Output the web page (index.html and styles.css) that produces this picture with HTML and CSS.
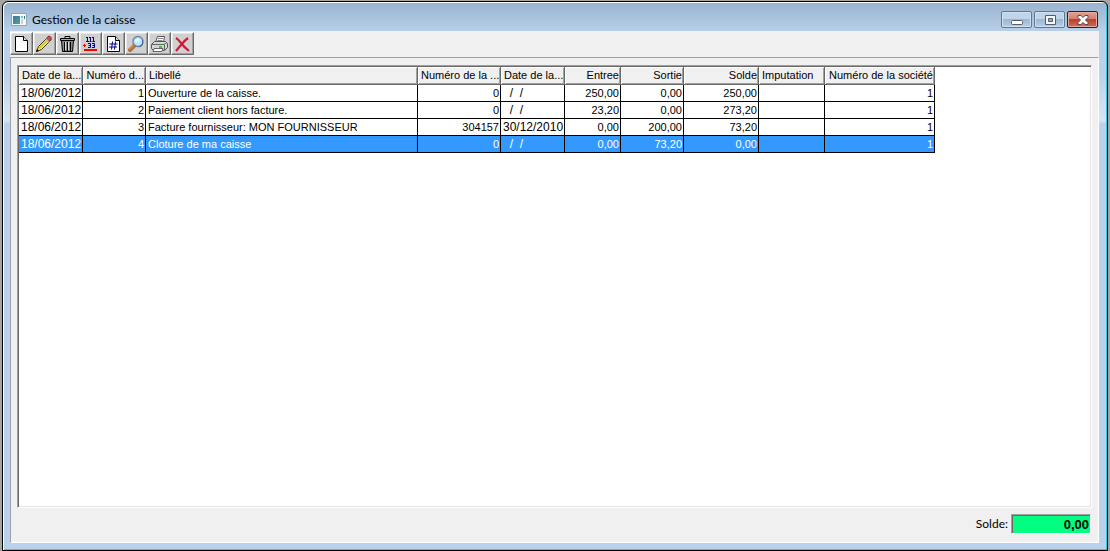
FILE: index.html
```html
<!DOCTYPE html>
<html lang="fr">
<head>
<meta charset="utf-8">
<title>Gestion de la caisse</title>
<link rel="stylesheet" href="styles.css">
</head>
<body>
<div class="window">
  <header class="titlebar">
    <svg class="app-icon" width="16" height="13" viewBox="0 0 16 13"><defs><linearGradient id="app" x2="1" y2="1"><stop stop-color="#3a70b8"/><stop offset="1" stop-color="#54a878"/></linearGradient></defs><path fill="#f8f8f8" stroke="#98a4b0" d="M.5.5h15v12H.5z"/><path fill="url(#app)" d="M2 3h7v8H2z"/><path fill="#83b7c8" d="M10 3h2v2h-2z"/><path fill="#3d7299" d="M13 3h1v3h-1z"/><path fill="#ccd4d8" d="M10 6h2v5h-2z"/></svg>
    <h1 class="title">Gestion de la caisse</h1>
    <div class="caption-buttons">
      <button class="caption" aria-label="Réduire"><svg width="12" height="12" viewBox="0 0 12 12"><rect x=".5" y="6.500" width="11" height="4" rx="1" fill="#fff" stroke="#545b6b"/></svg></button>
      <button class="caption" aria-label="Agrandir"><svg width="12" height="12" viewBox="0 0 12 12"><path d="M1.500 1.500h10v9h-10z" fill="#f5f5f5" stroke="#545b6b"/><path d="M4.500 4.500h4v3h-4z" fill="#8db0cd" stroke="#545b6b"/></svg></button>
      <button class="caption close" aria-label="Fermer"><svg width="12" height="12" viewBox="0 0 12 12"><path d="M1 1.500h3l2 2 2-2h3v2L8.500 6 11 8.500v2H8l-2-2-2 2H1v-2L3.500 6 1 3.500z" fill="#fafafa" stroke="#5a4852"/></svg></button>
    </div>
  </header>
  <main class="client">
    <div class="toolbar">
      <button class="tool" aria-label="Nouveau"><svg viewBox="0 0 18 18"><path d="M3.500 1.500h8l4 4v11h-12z" fill="#fff" stroke="#000"/><path d="M11.500 1.500v4h4" fill="#ddd" stroke="#000"/></svg></button>
      <button class="tool" aria-label="Modifier"><svg viewBox="0 0 18 18"><path d="M1.500 16.500l2-5 8-8 3 3-8 8z" fill="#f6e64a" stroke="#3c3a16"/><path d="M4.500 13l8-8" stroke="#b0a020" stroke-width="1"/><path d="M11.500 3.500l1.500-2q2-1 3 1t-1.500 4z" fill="#e4473e" stroke="#662c2c"/><path d="M11 4l3 3" stroke="#bbb" stroke-width="1.500"/><path d="M1 17l1-3 2 2z" fill="#000"/></svg></button>
      <button class="tool" aria-label="Supprimer"><svg viewBox="0 0 18 18"><path d="M3.500 5.500h12l-1 11h-10z" fill="#8a8a8a" stroke="#000"/><path d="M2.500 3.500h14v2h-14z" fill="#aaa" stroke="#000"/><path d="M7 3V1.500h5V3" fill="none" stroke="#000"/><path d="M6.500 7v9M9.500 7v9M12.500 7v9" stroke="#000"/><path d="M7.500 7v8M10.500 7v8" stroke="#ddd"/></svg></button>
      <button class="tool" aria-label="Calculer"><svg viewBox="0 0 18 18"><path d="M5 2.500h1.500V6M9 2.500h-1M9.500 2v4M11 2.500h1.500V6M5 6.500h3M8.500 6.500h2M11.500 6.500H14M6.500 2v4M12.500 2v4" stroke="#00008c" fill="none"/><path d="M7 8.500h2.500v4H7M7.500 10.500h2M11 8.500h2.500v4H11M11.500 10.500h2" stroke="#00008c" fill="none"/><path d="M2 10.500h3M3.500 9v3" stroke="#f00" stroke-width="1"/><path d="M3 14h13v2H3z" fill="#f00"/></svg></button>
      <button class="tool" aria-label="Numéroter"><svg viewBox="0 0 18 18"><path d="M3.500 1.500h8l4 4v11h-12z" fill="#fff" stroke="#000"/><path d="M11.500 1.500v4h4" fill="#ddd" stroke="#000"/><path d="M8.500 6.500l-1 8M11.500 6.500l-1 8M5.500 9h8M5 12h8" stroke="#00008c" stroke-width="1"/></svg></button>
      <button class="tool" aria-label="Rechercher"><svg viewBox="0 0 18 18"><path d="M3 15l5-5" stroke="#b87038" stroke-width="4" stroke-linecap="round"/><path d="M2.500 14l4-4" stroke="#e8ae74"/><circle cx="11" cy="6.500" r="5" fill="#b5ebfb" stroke="#6a7ea0" stroke-width="1.300"/><path d="M8 7q0-3 4-4v4z" fill="#effcff"/><path d="M15.500 5v5l-3 2" stroke="#4c628c" fill="none"/></svg></button>
      <button class="tool" aria-label="Imprimer"><svg viewBox="0 0 18 18"><path d="M5.500 7.500l2-6h7l-1 6z" fill="#fff" stroke="#555"/><path d="M8 3.500h5M7.500 5.500h5" stroke="#888"/><path d="M1.500 9.500l3-3h11l2 2v4l-3 3h-11l-2-2z" fill="#d6d6d0" stroke="#555"/><path d="M2 9.500h12l3-2M14.500 10v5" stroke="#666" fill="none"/><path d="M4 13.500h9l-1 3H3z" fill="#fff" stroke="#666"/><path d="M9 12h3" stroke="#2bd02b" stroke-width="2"/></svg></button>
      <button class="tool" aria-label="Quitter"><svg viewBox="0 0 18 18"><path d="M3 3q2 1 5 5t8 8M15 3q-4 3-7 7l-5 6" stroke="#d01838" stroke-width="2.200" fill="none"/></svg></button>
    </div>
    <section class="panel">
      <div class="grid">
        <table class="cash">
          <colgroup><col class="c-date"><col class="c-num"><col class="c-label"><col class="c-piece"><col class="c-date"><col class="c-in"><col class="c-num"><col class="c-balance"><col class="c-imp"><col class="c-company"></colgroup>
          <thead><tr><th>Date de la...</th><th class="r">Numéro d...</th><th>Libellé</th><th class="r">Numéro de la ...</th><th>Date de la...</th><th class="r">Entree</th><th class="r">Sortie</th><th class="r">Solde</th><th>Imputation</th><th class="r">Numéro de la société</th></tr></thead>
          <tbody>
            <tr><td class="d">18/06/2012</td><td class="r">1</td><td>Ouverture de la caisse.</td><td class="r">0</td><td class="d empty">  /  /</td><td class="r">250,00</td><td class="r">0,00</td><td class="r">250,00</td><td></td><td class="r">1</td></tr>
            <tr><td class="d">18/06/2012</td><td class="r">2</td><td>Paiement client hors facture.</td><td class="r">0</td><td class="d empty">  /  /</td><td class="r">23,20</td><td class="r">0,00</td><td class="r">273,20</td><td></td><td class="r">1</td></tr>
            <tr><td class="d">18/06/2012</td><td class="r">3</td><td>Facture fournisseur: MON FOURNISSEUR</td><td class="r">304157</td><td class="d">30/12/2010</td><td class="r">0,00</td><td class="r">200,00</td><td class="r">73,20</td><td></td><td class="r">1</td></tr>
            <tr class="selected"><td class="d">18/06/2012</td><td class="r">4</td><td class="focus">Cloture de ma caisse</td><td class="r">0</td><td class="d empty">  /  /</td><td class="r">0,00</td><td class="r">73,20</td><td class="r">0,00</td><td></td><td class="r">1</td></tr>
          </tbody>
        </table>
      </div>
      <div class="footer">
        <label for="solde">Solde:</label>
        <input class="total" id="solde" type="text" value="0,00" readonly>
      </div>
    </section>
  </main>
</div>
</body>
</html>
```
FILE: styles.css
```css
* { box-sizing: border-box; }

body {
  margin: 0;
  height: 100vh;
  padding: 1px 2px 0;
  background: #a5a5a5;
  font: 11px/16px "Liberation Sans", Arial, sans-serif;
  color: #000;
}

.window {
  height: 100%;
  display: flex;
  flex-direction: column;
  padding: 0 8px 7px 7px;
  border: 1px solid #000;
  border-radius: 6px 6px 0 0;
  background: linear-gradient(#98b3d0, #b9d1ea 30px, #b9d1ea 70px, #d8e6f5 118px, #b9d1ea 122px);
  box-shadow: inset 1px 1px #fff, inset -1px -1px #35c8e2;
}

.titlebar {
  flex: none;
  height: 29px;
  display: flex;
  align-items: center;
  padding: 6px 1px 0 1px;
  gap: 5px;
}

.title {
  flex: 1;
  margin: 0;
  font: 12px/16px Lato, "Open Sans", sans-serif;
}

.caption-buttons { display: flex; gap: 2px; }

.caption {
  width: 31px;
  height: 17px;
  display: flex;
  align-items: center;
  justify-content: center;
  padding: 0;
  border: 1px solid #5f7790;
  border-radius: 2px;
  background: linear-gradient(#c1d5e9 50%, #9bb8d3 50%, #b5cfe6);
  box-shadow: inset 0 0 0 1px #cfe0f0;
}

.caption.close {
  border-color: #43141c;
  background: linear-gradient(#e0a093, #d27c6c 50%, #b9402c 50%, #cf6d55);
  box-shadow: inset 0 0 0 1px #e5aca0;
}

.client {
  flex: 1;
  display: flex;
  flex-direction: column;
  min-height: 0;
  background: #f0f0f0;
}

.toolbar { flex: none; display: flex; height: 26px; padding-top: 1px; }

.tool {
  width: 23px;
  height: 23px;
  padding: 1px;
  border: 1px solid;
  border-color: #fff #696969 #696969 #fff;
  background: #d0d0d0;
  box-shadow: inset -1px -1px #a0a0a0, inset 1px 1px #e6e6e6;
}

.tool svg { display: block; width: 18px; height: 18px; }

.panel {
  flex: 1;
  display: flex;
  flex-direction: column;
  min-height: 0;
  padding: 7px 6px 8px;
  border: 1px solid;
  border-color: #a0a0a0 #fff #fff #a0a0a0;
}

.grid {
  flex: 1;
  min-height: 0;
  overflow: hidden;
  border: 1px solid;
  border-color: #a0a0a0 #fff #fff #a0a0a0;
  background: #fff;
  box-shadow: inset 1px 1px #696969, inset -1px -1px #e3e3e3;
  padding: 1px;
}

.cash { width: 916px; table-layout: fixed; border-spacing: 0; }
.c-date { width: 64px; }
.c-num { width: 63px; }
.c-label { width: 272px; }
.c-piece { width: 83px; }
.c-in { width: 56px; }
.c-balance { width: 75px; }
.c-imp { width: 66px; }
.c-company { width: 110px; }

.cash th,
.cash td {
  height: 17px;
  padding: 0 1px 0 2px;
  line-height: 16px;
  font-weight: 400;
  text-align: left;
  white-space: nowrap;
  overflow: hidden;
  border-right: 1px solid #000;
  border-bottom: 1px solid #000;
}

.cash th {
  height: 18px;
  line-height: 17px;
  padding-left: 3px;
  background: #f0f0f0;
  border-color: #696969;
  box-shadow: inset 1px 1px #fff, inset -1px -1px #a0a0a0;
}

.cash .r { text-align: right; }
.cash .d { font-size: 12px; }
.cash .empty { white-space: pre; }
.selected td { background: #3399ff; color: #fff; }
.selected .focus { outline: 1px dotted #cc6600; outline-offset: -2px; }

.footer {
  flex: none;
  display: flex;
  justify-content: flex-end;
  align-items: center;
  gap: 3px;
  padding: 6px 1px 0 0;
}

.footer label { font: 12px/16px Lato, "Open Sans", sans-serif; }

.total {
  width: 80px;
  height: 20px;
  padding: 0 1px;
  border: 1px solid;
  border-color: #a0a0a0 #fff #fff #a0a0a0;
  border-radius: 0;
  background: #00ff80;
  box-shadow: inset 1px 1px #696969;
  color: #000;
  font: bold 13px/16px "Liberation Sans", Arial, sans-serif;
  text-align: right;
}
```
